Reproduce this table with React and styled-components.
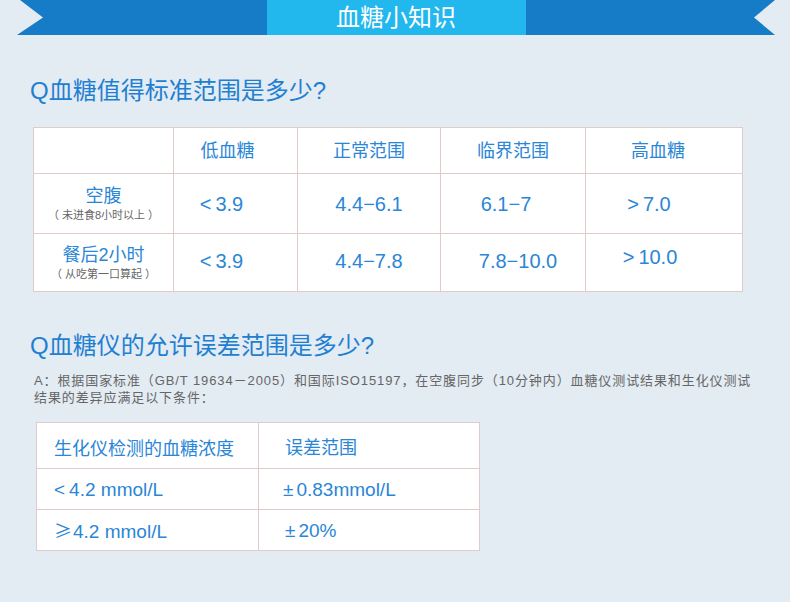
import React from "react";
import styled, { createGlobalStyle } from "styled-components";

const Global = createGlobalStyle`
  html, body { margin: 0; padding: 0; background: #e3ebf3; }
  body { font-family: "Liberation Sans", "Noto Sans CJK SC", sans-serif; }
`;

const Page = styled.div`
  width: 790px;
  height: 602px;
  background: #e3ebf3;
  overflow: hidden;
  display: flex;
  flex-direction: column;
  align-items: flex-start;
`;

const Banner = styled.div`
  margin-left: 17px;
  width: 758px;
  height: 35px;
  flex: none;
  background: #167cc7;
  clip-path: polygon(3px 0, 100% 0, calc(100% - 21px) 50%, 100% 100%, 0 100%, 26px 50%);
  display: flex;
  justify-content: center;
`;

const BannerTitle = styled.div`
  width: 259px;
  background: #22b8ee;
  color: #fff;
  font-size: 24px;
  line-height: 35px;
  text-align: center;
`;

const Section = styled.section`
  display: flex;
  flex-direction: column;
  align-items: flex-start;
  padding-top: ${(p) => p.$pt}px;
`;

const Heading = styled.h2`
  margin: 0 0 0 30px;
  font-size: 24px;
  line-height: 28px;
  font-weight: 400;
  color: #1f80d2;
`;

const Table = styled.table`
  border-collapse: collapse;
  background: #fff;
  margin: ${(p) => p.$mt}px 0 0 ${(p) => p.$ml}px;
  table-layout: fixed;
  color: #2a86d6;
`;

const Cell = styled.td`
  box-sizing: border-box;
  border: 1px solid #e0caca;
  height: ${(p) => p.$h}px;
  text-align: ${(p) => p.$align || "center"};
  padding: ${(p) => p.$pt || 0}px ${(p) => p.$pr || 0}px ${(p) => p.$pb || 0}px ${(p) => p.$pl || 0}px;
  font-size: ${(p) => p.$fs || 18}px;
  line-height: 22px;
  vertical-align: middle;
  white-space: nowrap;
`;

const RowLabel = styled.div`
  font-size: 18px;
  line-height: 22px;
`;

const RowNote = styled.div`
  font-size: 11px;
  line-height: 14px;
  color: #666;
  margin-top: 1px;
  white-space: pre;
`;

const Sym = styled.span`
  margin-right: ${(p) => p.$gap ?? 4}px;
  font-family: ${(p) => (p.$cjk ? '"Noto Sans CJK SC", sans-serif' : "inherit")};
  font-size: ${(p) => (p.$cjk ? "18px" : "inherit")};
`;

const Paragraph = styled.p`
  margin: 12px 0 0 34px;
  width: 720px;
  font-size: 13px;
  line-height: 17px;
  letter-spacing: 0.9px;
  color: #666;
`;

const t1cols = [140, 124, 143, 145, 157];

export default function App() {
  return (
    <Page>
      <Global />
      <Banner>
        <BannerTitle>血糖小知识</BannerTitle>
      </Banner>

      <Section $pt={42}>
        <Heading>Q血糖值得标准范围是多少?</Heading>
        <Table $mt={22} $ml={33}>
          <colgroup>
            {t1cols.map((w, i) => (
              <col key={i} style={{ width: w }} />
            ))}
          </colgroup>
          <tbody>
            <tr>
              <Cell $h={46}></Cell>
              <Cell $h={46} $pr={16}>低血糖</Cell>
              <Cell $h={46}>正常范围</Cell>
              <Cell $h={46}>临界范围</Cell>
              <Cell $h={46} $pr={12}>高血糖</Cell>
            </tr>
            <tr>
              <Cell $h={60}>
                <RowLabel>空腹</RowLabel>
                <RowNote>（ 未进食8小时以上 ）</RowNote>
              </Cell>
              <Cell $h={60} $fs={20} $pr={28}><Sym>&lt;</Sym>3.9</Cell>
              <Cell $h={60} $fs={20}>4.4−6.1</Cell>
              <Cell $h={60} $fs={20} $pr={14}>6.1−7</Cell>
              <Cell $h={60} $fs={20} $pr={30}><Sym>&gt;</Sym>7.0</Cell>
            </tr>
            <tr>
              <Cell $h={58}>
                <RowLabel>餐后2小时</RowLabel>
                <RowNote>（ 从吃第一口算起 ）</RowNote>
              </Cell>
              <Cell $h={58} $fs={20} $pr={28} $pb={4}><Sym>&lt;</Sym>3.9</Cell>
              <Cell $h={58} $fs={20} $pb={4}>4.4−7.8</Cell>
              <Cell $h={58} $fs={20} $pl={10} $pb={4}>7.8−10.0</Cell>
              <Cell $h={58} $fs={20} $pr={28} $pb={12}><Sym>&gt;</Sym>10.0</Cell>
            </tr>
          </tbody>
        </Table>
      </Section>

      <Section $pt={40}>
        <Heading>Q血糖仪的允许误差范围是多少?</Heading>
        <Paragraph>
          A：根据国家标准（GB/T 19634－2005）和国际ISO15197，在空腹同步（10分钟内）血糖仪测试结果和生化仪测试结果的差异应满足以下条件：
        </Paragraph>
        <Table $mt={16} $ml={36}>
          <colgroup>
            <col style={{ width: 222 }} />
            <col style={{ width: 221 }} />
          </colgroup>
          <tbody>
            <tr>
              <Cell $h={46} $align="left" $pl={17} $pt={6}>生化仪检测的血糖浓度</Cell>
              <Cell $h={46} $align="left" $pl={26} $pt={4}>误差范围</Cell>
            </tr>
            <tr>
              <Cell $h={41} $fs={19} $align="left" $pl={17} $pt={2}><Sym>&lt;</Sym>4.2 mmol/L</Cell>
              <Cell $h={41} $fs={19} $align="left" $pl={24} $pt={2}><Sym $gap={3}>±</Sym>0.83mmol/L</Cell>
            </tr>
            <tr>
              <Cell $h={41} $fs={19} $align="left" $pl={17} $pt={2}><Sym $cjk $gap={1}>≥</Sym>4.2 mmol/L</Cell>
              <Cell $h={41} $fs={19} $align="left" $pl={26} $pt={2}><Sym $gap={3}>±</Sym>20%</Cell>
            </tr>
          </tbody>
        </Table>
      </Section>
    </Page>
  );
}
